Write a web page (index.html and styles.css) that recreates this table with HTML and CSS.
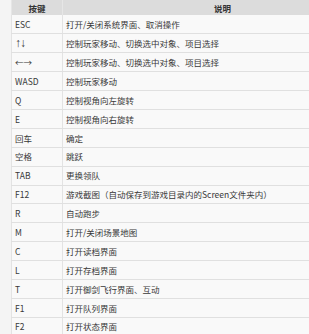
FILE: index.html
```html
<!DOCTYPE html>
<html lang="zh">
<head>
<meta charset="utf-8">
<title>按键说明</title>
<link rel="stylesheet" href="styles.css">
</head>
<body>
<div class="page">
<table class="keys">
<colgroup><col class="c-key"><col class="c-desc"></colgroup>
<thead>
<tr><th>按键</th><th>说明</th></tr>
</thead>
<tbody>
<tr><td>ESC</td><td>打开/关闭系统界面、取消操作</td></tr>
<tr><td><span class="arrows">↑↓</span></td><td>控制玩家移动、切换选中对象、项目选择</td></tr>
<tr><td>←→</td><td>控制玩家移动、切换选中对象、项目选择</td></tr>
<tr><td>WASD</td><td>控制玩家移动</td></tr>
<tr><td>Q</td><td>控制视角向左旋转</td></tr>
<tr><td>E</td><td>控制视角向右旋转</td></tr>
<tr><td>回车</td><td>确定</td></tr>
<tr><td>空格</td><td>跳跃</td></tr>
<tr><td>TAB</td><td>更换领队</td></tr>
<tr><td>F12</td><td>游戏截图（自动保存到游戏目录内的Screen文件夹内）</td></tr>
<tr><td>R</td><td>自动跑步</td></tr>
<tr><td>M</td><td>打开/关闭场景地图</td></tr>
<tr><td>C</td><td>打开读档界面</td></tr>
<tr><td>L</td><td>打开存档界面</td></tr>
<tr><td>T</td><td>打开御剑飞行界面、互动</td></tr>
<tr><td>F1</td><td>打开队列界面</td></tr>
<tr><td>F2</td><td>打开状态界面</td></tr>
</tbody>
</table>
</div>
</body>
</html>
```
FILE: styles.css
```css
html, body {
  margin: 0;
  padding: 0;
  overflow: hidden;
  background: #f4f4f4;
}
.page {
  padding-left: 11px;
  width: 400px;
}
.keys {
  border-collapse: collapse;
  table-layout: fixed;
  width: 371px;
  font-family: "Noto Sans CJK SC", "Noto Sans", sans-serif;
  font-size: 8.5px;
  color: #383838;
}
.c-key { width: 51px; }
.c-desc { width: 320px; }
.keys th {
  background: #dcdcdc;
  height: 15px;
  padding: 0;
  font-weight: bold;
  text-align: center;
  color: #333;
  border-left: 1px solid #e6e6e6;
  border-right: 1px solid #e6e6e6;
}
.keys td {
  background: #f9f9f9;
  height: 18.9px;
  padding: 0 0 0 3px;
  box-sizing: border-box;
  border-bottom: 1px solid #e0e0e0;
  border-left: 1px solid #e3e3e3;
  border-right: 1px solid #e3e3e3;
  white-space: nowrap;
  line-height: 1;
}
.arrows {
  font-family: "Liberation Sans", "DejaVu Sans", sans-serif;
  font-size: 12px;
  letter-spacing: -1px;
  line-height: 1;
}
```
